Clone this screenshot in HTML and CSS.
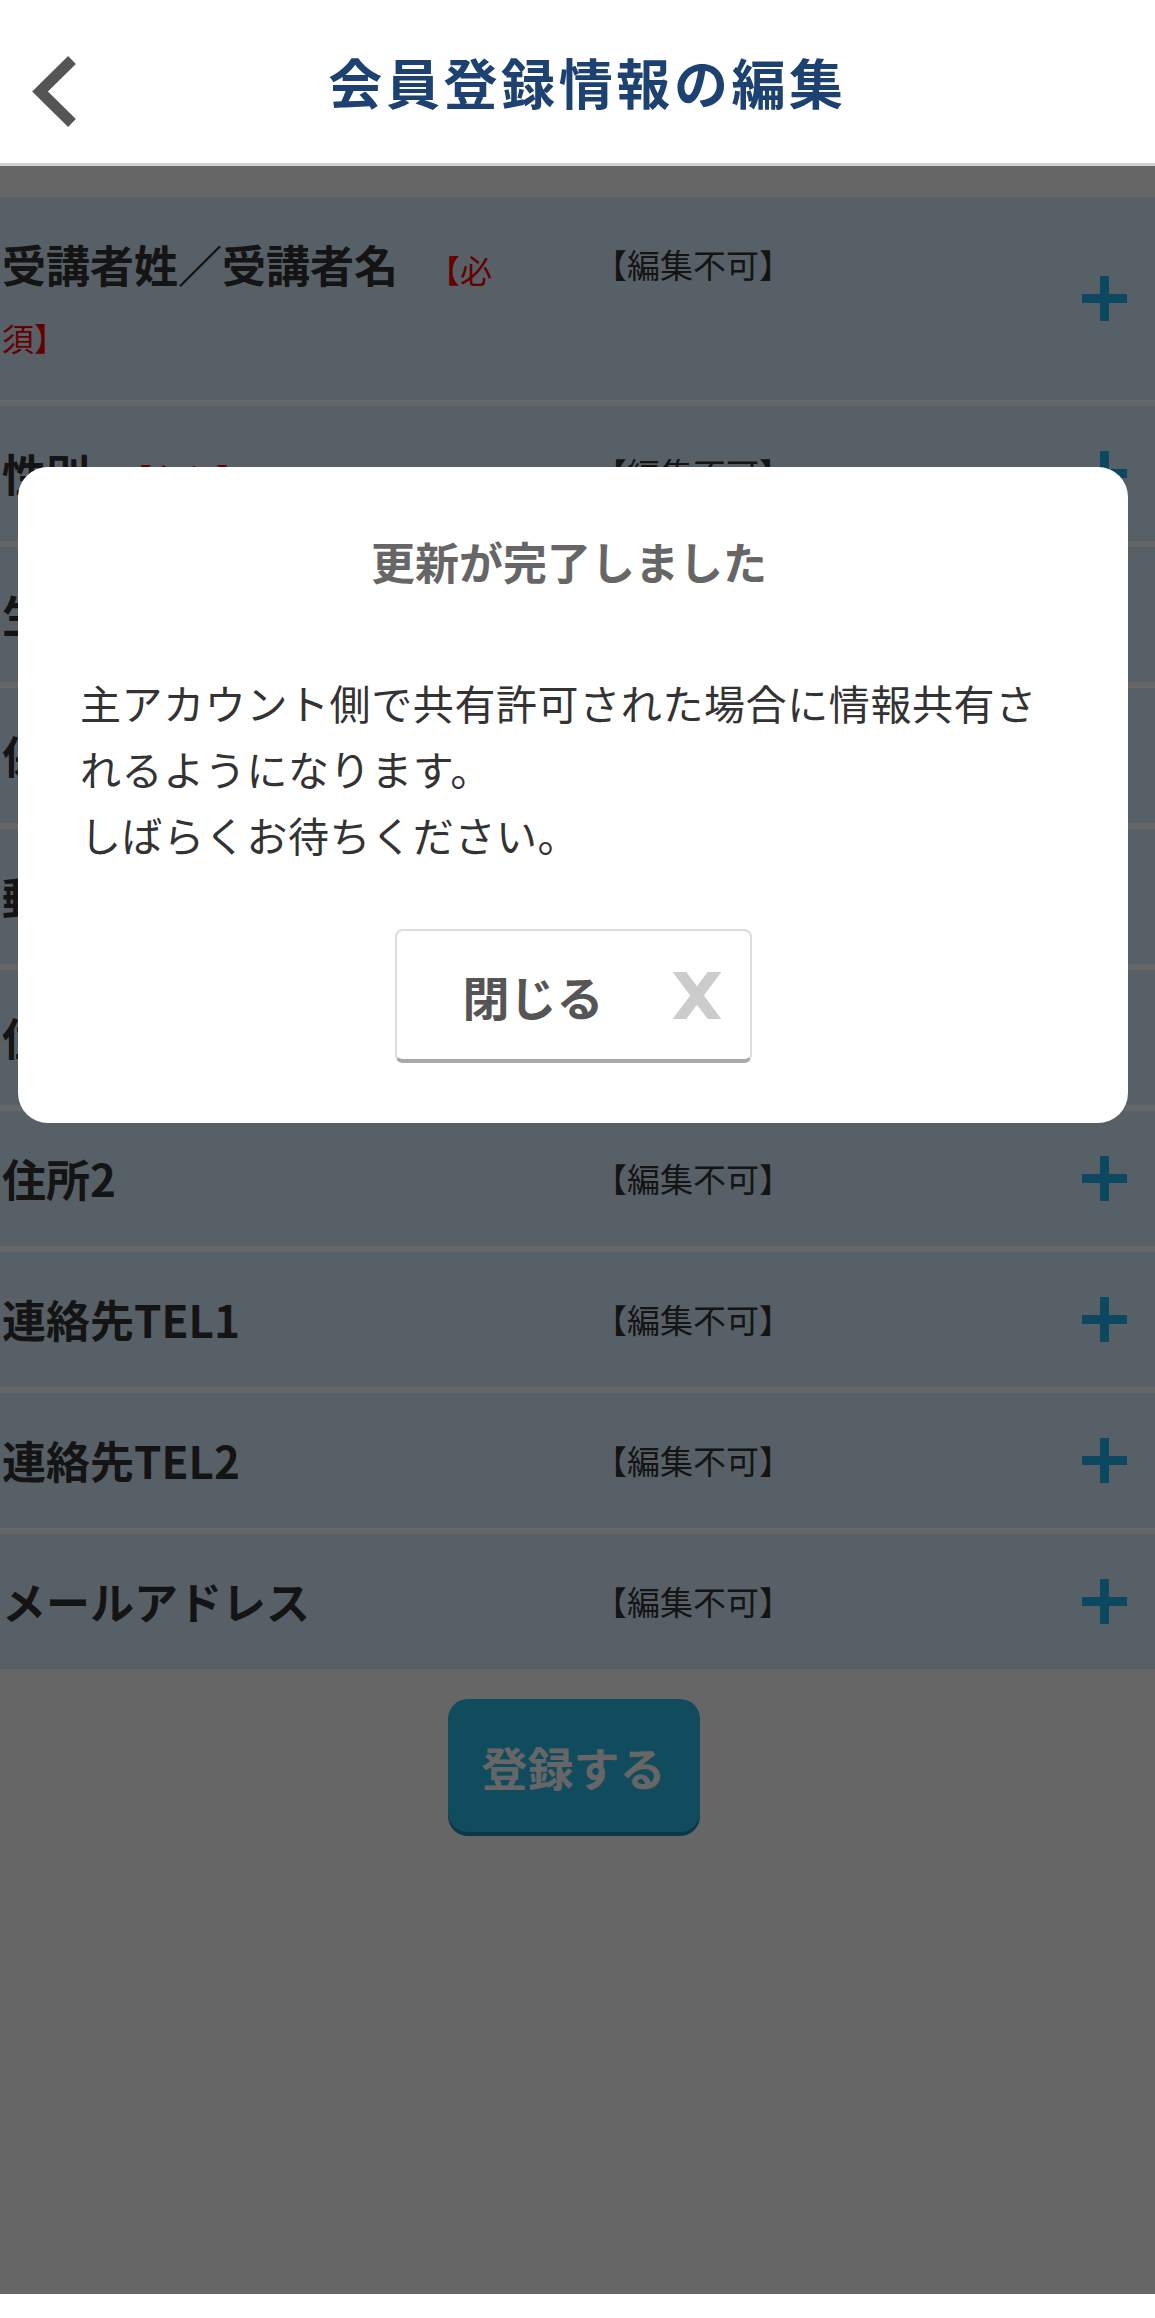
FILE: index.html
```html
<!DOCTYPE html>
<html lang="ja">
<head>
    <meta charset="UTF-8">
    <meta name="viewport" content="width=device-width, initial-scale=1.0">
    <title>会員登録情報の編集</title>
    <link rel="stylesheet" href="styles.css">
</head>
<body>

<header class="app-header">
    <a href="#" class="back-link" aria-label="戻る">
        <svg width="90" height="90" viewBox="0 0 90 90">
            <polyline points="72,21 40,52.5 72,84" fill="none" stroke="#555" stroke-width="11" stroke-linejoin="miter"/>
        </svg>
    </a>
    <h1 class="app-title">会員登録情報の編集</h1>
    <span></span>
</header>

<main>
    <div class="field-list">
        <div class="field-row">
            <div class="field-label">受講者姓／受講者名<span class="req">【必須】</span></div>
            <div class="field-status">【編集不可】</div>
            <svg class="field-toggle" viewBox="0 0 45 45"><rect x="18" y="0" width="9" height="45"/><rect x="0" y="18" width="45" height="9"/></svg>
        </div>
        <div class="field-row">
            <div class="field-label">性別<span class="req">【必須】</span></div>
            <div class="field-status">【編集不可】</div>
            <svg class="field-toggle" viewBox="0 0 45 45"><rect x="18" y="0" width="9" height="45"/><rect x="0" y="18" width="45" height="9"/></svg>
        </div>
        <div class="field-row">
            <div class="field-label">生年月日<span class="req">【必須】</span></div>
            <div class="field-status">【編集不可】</div>
            <svg class="field-toggle" viewBox="0 0 45 45"><rect x="18" y="0" width="9" height="45"/><rect x="0" y="18" width="45" height="9"/></svg>
        </div>
        <div class="field-row">
            <div class="field-label">保護者名</div>
            <div class="field-status">【編集不可】</div>
            <svg class="field-toggle" viewBox="0 0 45 45"><rect x="18" y="0" width="9" height="45"/><rect x="0" y="18" width="45" height="9"/></svg>
        </div>
        <div class="field-row">
            <div class="field-label">郵便番号</div>
            <div class="field-status">【編集不可】</div>
            <svg class="field-toggle" viewBox="0 0 45 45"><rect x="18" y="0" width="9" height="45"/><rect x="0" y="18" width="45" height="9"/></svg>
        </div>
        <div class="field-row">
            <div class="field-label">住所1</div>
            <div class="field-status">【編集不可】</div>
            <svg class="field-toggle" viewBox="0 0 45 45"><rect x="18" y="0" width="9" height="45"/><rect x="0" y="18" width="45" height="9"/></svg>
        </div>
        <div class="field-row">
            <div class="field-label">住所2</div>
            <div class="field-status">【編集不可】</div>
            <svg class="field-toggle" viewBox="0 0 45 45"><rect x="18" y="0" width="9" height="45"/><rect x="0" y="18" width="45" height="9"/></svg>
        </div>
        <div class="field-row">
            <div class="field-label">連絡先TEL1</div>
            <div class="field-status">【編集不可】</div>
            <svg class="field-toggle" viewBox="0 0 45 45"><rect x="18" y="0" width="9" height="45"/><rect x="0" y="18" width="45" height="9"/></svg>
        </div>
        <div class="field-row">
            <div class="field-label">連絡先TEL2</div>
            <div class="field-status">【編集不可】</div>
            <svg class="field-toggle" viewBox="0 0 45 45"><rect x="18" y="0" width="9" height="45"/><rect x="0" y="18" width="45" height="9"/></svg>
        </div>
        <div class="field-row">
            <div class="field-label">メールアドレス</div>
            <div class="field-status">【編集不可】</div>
            <svg class="field-toggle" viewBox="0 0 45 45"><rect x="18" y="0" width="9" height="45"/><rect x="0" y="18" width="45" height="9"/></svg>
        </div>
    </div>

    <div class="submit-wrap">
        <button type="button" class="btn-submit">登録する</button>
    </div>
</main>

<!-- Modal -->
<div class="overlay"></div>
<div class="dialog">
    <h2 class="dialog-title">更新が完了しました</h2>
    <p class="dialog-text">主アカウント側で共有許可された場合に情報共有されるようになります。<br>しばらくお待ちください。</p>
    <button type="button" class="btn-close">
        <span>閉じる</span>
        <svg width="48" height="47" viewBox="0 0 48 47">
            <line x1="2" y1="-6" x2="46" y2="53" stroke="#ccc" stroke-width="11"/>
            <line x1="46" y1="-6" x2="2" y2="53" stroke="#ccc" stroke-width="11"/>
        </svg>
    </button>
</div>

</body>
</html>
```

FILE: styles.css
```css
body {
    margin: 0;
    min-height: 2318px;
    position: relative;
    background-color: #fff;
    font-family: "Noto Sans CJK JP", "Noto Sans", sans-serif;
    color: #333;
}

/* Header */
.app-header {
    display: grid;
    grid-template-columns: 130px 1fr 110px;
    align-items: center;
    height: 163px;
    border-bottom: 3px solid #d2d2d2;
}
.back-link {
    display: block;
    height: 90px;
    margin-top: 4px;
}
.app-title {
    margin: 0;
    text-align: center;
    font-size: 54px;
    font-weight: 700;
    letter-spacing: 3.6px;
    color: #1d4272;
}

/* Fields */
.field-list {
    display: flex;
    flex-direction: column;
    gap: 6px;
    margin-top: 31px;
}
.field-row {
    display: flex;
    align-items: flex-start;
    background-color: #d7f0ff;
    padding: 33px 28px 34px 2px;
}
.field-label {
    width: 510px;
    margin-right: 82px;
    font-size: 44px;
    font-weight: 700;
    line-height: 68px;
    color: #333;
}
.req {
    padding-left: 30px;
    font-size: 32px;
    font-weight: 400;
    line-height: 1;
    color: #f00;
}
.field-status {
    flex: 1;
    font-size: 33px;
    line-height: 68px;
    color: #333;
}
.field-toggle {
    align-self: center;
    width: 45px;
    height: 45px;
    fill: #1fb6f2;
}

.submit-wrap {
    margin-top: 30px;
    text-align: center;
}
.btn-submit {
    width: 252px;
    height: 133px;
    margin-right: 8px;
    border: none;
    border-radius: 20px;
    background-color: #2cbdea;
    box-shadow: 0 4px 0 #178fb5;
    color: #fff;
    font-family: inherit;
    font-size: 46px;
    font-weight: 700;
}

/* Modal */
.overlay {
    position: absolute;
    top: 166px;
    left: 0;
    right: 0;
    height: 2128px;
    background-color: rgba(0, 0, 0, 0.6);
}
.dialog {
    position: absolute;
    top: 467px;
    left: 18px;
    width: 1110px;
    box-sizing: border-box;
    padding: 61px 70px 60px 62px;
    background-color: #fff;
    border-radius: 30px;
    text-align: center;
}
.dialog-title {
    margin: 0;
    font-size: 44px;
    font-weight: 700;
    line-height: 66px;
    color: #666;
}
.dialog-text {
    margin: 75px 0 62px;
    text-align: left;
    font-size: 41px;
    letter-spacing: 0.6px;
    line-height: 66px;
    color: #333;
}
.btn-close {
    display: inline-flex;
    justify-content: space-between;
    align-items: center;
    box-sizing: border-box;
    width: 357px;
    height: 134px;
    margin-left: 8px;
    padding: 0 29px 0 66px;
    background-color: #fff;
    border: 2px solid #ddd;
    border-bottom: 4px solid #a8a8a8;
    border-radius: 8px;
    font-family: inherit;
    font-size: 47px;
    font-weight: 700;
    color: #555;
}
```
